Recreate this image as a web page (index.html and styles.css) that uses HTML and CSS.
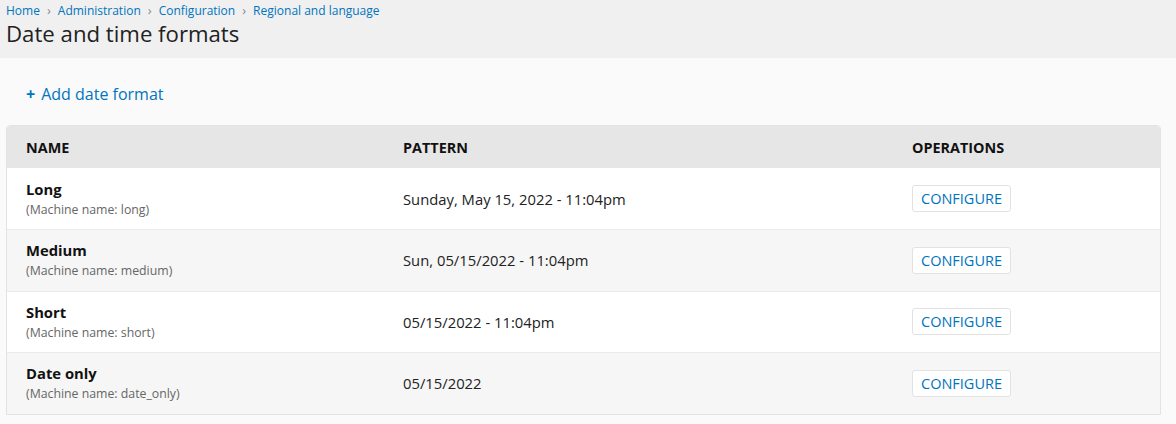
FILE: index.html
```html
<!DOCTYPE html>
<html lang="en">
<head>
<meta charset="utf-8">
<title>Date and time formats</title>
<link rel="stylesheet" href="styles.css">
</head>
<body>
<header class="page-header">
  <nav class="breadcrumb">
    <a href="#">Home</a><span class="sep">›</span><a href="#">Administration</a><span class="sep">›</span><a href="#">Configuration</a><span class="sep">›</span><a href="#">Regional and language</a>
  </nav>
  <h1 class="title">Date and time formats</h1>
</header>
<main class="content">
  <div class="actions">
    <a href="#" class="add-link"><span class="plus">+</span>Add date format</a>
  </div>
  <table class="formats">
    <thead>
      <tr>
        <th class="col-name">Name</th>
        <th class="col-pattern">Pattern</th>
        <th class="col-ops">Operations</th>
      </tr>
    </thead>
    <tbody>
      <tr>
        <td><div class="fname">Long</div><div class="machine">(Machine name: long)</div></td>
        <td class="pattern">Sunday, May 15, 2022 - 11:04pm</td>
        <td><a href="#" class="btn">Configure</a></td>
      </tr>
      <tr class="even">
        <td><div class="fname">Medium</div><div class="machine">(Machine name: medium)</div></td>
        <td class="pattern">Sun, 05/15/2022 - 11:04pm</td>
        <td><a href="#" class="btn">Configure</a></td>
      </tr>
      <tr>
        <td><div class="fname">Short</div><div class="machine">(Machine name: short)</div></td>
        <td class="pattern">05/15/2022 - 11:04pm</td>
        <td><a href="#" class="btn">Configure</a></td>
      </tr>
      <tr class="even">
        <td><div class="fname">Date only</div><div class="machine">(Machine name: date_only)</div></td>
        <td class="pattern">05/15/2022</td>
        <td><a href="#" class="btn">Configure</a></td>
      </tr>
    </tbody>
  </table>
</main>
</body>
</html>
```
FILE: styles.css
```css
html, body {
  margin: 0;
  padding: 0;
}
body {
  background: #fafafa;
  font-family: "Open Sans", "DejaVu Sans", sans-serif;
  color: #222;
}
a {
  color: #0074bd;
  text-decoration: none;
}
.page-header {
  background: #f0f0f0;
  padding: 2px 6px 9px;
}
.breadcrumb {
  font-size: 12px;
  line-height: 17px;
}
.breadcrumb .sep {
  color: #888;
  margin: 0 7px;
  font-size: 13px;
}
.title {
  margin: 0;
  font-size: 22.2px;
  font-weight: 400;
  line-height: 30px;
  color: #222;
}
.content {
  padding: 25px 15px 0 6px;
}
.actions {
  padding-left: 20px;
  height: 20px;
  margin-bottom: 22px;
}
.add-link {
  font-size: 16px;
  line-height: 20px;
}
.plus {
  font-weight: 700;
  display: inline-block;
  margin-right: 6px;
}
.formats {
  width: 100%;
  table-layout: fixed;
  border-collapse: separate;
  border-spacing: 0;
  border: 1px solid #e3e3e3;
  border-radius: 4px 4px 0 0;
  background: #fff;
}
.formats th {
  background: #e6e6e6;
  text-align: left;
  text-transform: uppercase;
  font-size: 14.4px;
  font-weight: 700;
  color: #111;
  height: 42px;
  padding: 0 19px;
  box-sizing: border-box;
}
.formats th:first-child {
  border-top-left-radius: 3px;
}
.formats th:last-child {
  border-top-right-radius: 3px;
}
.col-name { width: 377px; }
.col-pattern { width: 509px; }
.formats td {
  border-top: 1px solid #ebebeb;
  padding: 0 19px;
  vertical-align: middle;
  font-size: 15px;
  height: 61.5px;
  box-sizing: border-box;
}
.formats tbody tr:first-child td {
  border-top: 0;
  height: 61px;
}
.formats tr.even td {
  background: #f6f6f6;
}
.fname {
  font-weight: 700;
  font-size: 14.8px;
  line-height: 22px;
  color: #111;
}
.machine {
  font-size: 12.3px;
  line-height: 20px;
  color: #666;
}
.formats td.pattern {
  font-size: 14.8px;
  color: #222;
}
.btn {
  display: inline-block;
  box-sizing: border-box;
  height: 27px;
  line-height: 25px;
  padding: 0 8px;
  border: 1px solid #e2e2e2;
  border-radius: 3px;
  background: #fff;
  font-size: 14.5px;
  text-transform: uppercase;
  color: #0074bd;
}
```
